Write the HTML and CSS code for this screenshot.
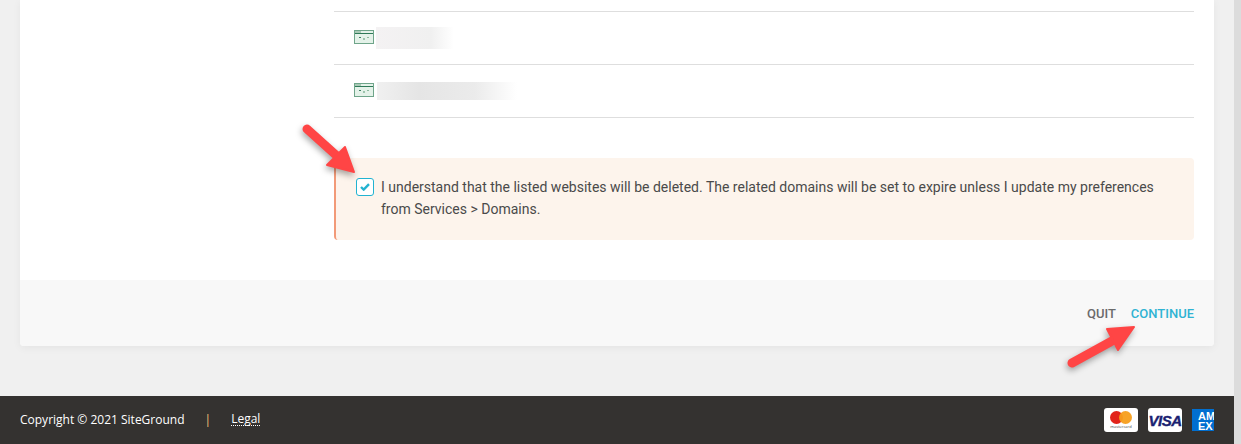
FILE: index.html
```html
<!DOCTYPE html>
<html lang="en">
<head>
  <meta charset="UTF-8">
  <title>SiteGround - Cancel Services</title>
  <link rel="stylesheet" href="styles.css">
</head>
<body>
  <div class="page">
    <main class="content">
      <section class="card">
        <div class="card-body">
          <ul class="site-list">
            <li class="site-row">
              <svg class="site-icon" width="20" height="14" viewBox="0 0 20 14">
                <rect x="0.5" y="0.5" width="19" height="13" fill="#e4f2e9" stroke="#6fa58a"/>
                <rect x="1" y="1" width="6" height="2" fill="#a9c9b6"/>
                <rect x="1" y="3" width="18" height="1" fill="#2f7a58"/>
                <rect x="5" y="7" width="2" height="1" fill="#3f7f62"/>
                <rect x="9" y="8" width="2" height="2" fill="#9cc4ad"/>
                <rect x="13" y="7" width="2" height="1" fill="#8dba9f"/>
              </svg>
              <span class="blur blur-short"></span>
            </li>
            <li class="site-row">
              <svg class="site-icon" width="20" height="14" viewBox="0 0 20 14">
                <rect x="0.5" y="0.5" width="19" height="13" fill="#e4f2e9" stroke="#6fa58a"/>
                <rect x="1" y="1" width="6" height="2" fill="#a9c9b6"/>
                <rect x="1" y="3" width="18" height="1" fill="#2f7a58"/>
                <rect x="5" y="7" width="2" height="1" fill="#3f7f62"/>
                <rect x="9" y="8" width="2" height="2" fill="#9cc4ad"/>
                <rect x="13" y="7" width="2" height="1" fill="#8dba9f"/>
              </svg>
              <span class="blur blur-long"></span>
            </li>
          </ul>
          <div class="notice">
            <span class="checkbox">
              <svg width="10" height="8" viewBox="0 0 10 8">
                <path d="M1 4l2.7 2.6L9 1.2" fill="none" stroke="#22b3d1" stroke-width="2.4"/>
              </svg>
            </span>
            <p class="notice-text">I understand that the listed websites will be deleted. The related domains will be set to expire unless I update my preferences from Services &gt; Domains.</p>
          </div>
        </div>
        <div class="card-actions">
          <a class="action action-quit">QUIT</a>
          <a class="action action-continue">CONTINUE</a>
        </div>
      </section>
    </main>
    <footer class="footer">
      <div class="footer-left">
        <span>Copyright © 2021 SiteGround</span>
        <span class="footer-sep">|</span>
        <a class="footer-link">Legal</a>
      </div>
      <div class="pay-cards">
        <span class="pay pay-mc">
          <span class="mc-circles"><i class="mc-red"></i><i class="mc-orange"></i></span>
          <span class="mc-name">mastercard</span>
        </span>
        <span class="pay pay-visa">VISA</span>
        <span class="pay-amex">AM<br>EX</span>
      </div>
    </footer>
  </div>
  <div class="scroll-track"></div>

  <!-- annotation arrows on top of the screenshot -->
  <svg class="arrows" width="1241" height="444" viewBox="0 0 1241 444">
    <g fill="#ff4545" stroke="#ff4545" stroke-linejoin="round">
      <path d="M307 129L337 156" fill="none" stroke-width="9" stroke-linecap="round"/>
      <path d="M327 165L345 147L354 172Z" stroke-width="2"/>
      <path d="M1072 363L1112 341" fill="none" stroke-width="9" stroke-linecap="round"/>
      <path d="M1107 329L1118 350L1134 327Z" stroke-width="2"/>
    </g>
  </svg>
</body>
</html>
```

FILE: styles.css
```css
* {
  box-sizing: border-box;
}
html, body {
  margin: 0;
  height: 444px;
  overflow: hidden;
}
body {
  position: relative;
  display: flex;
  background: #f0f0f0;
  font-family: "Roboto", "Liberation Sans", sans-serif;
  color: #4a4a4a;
}
.page {
  flex: 1;
  display: flex;
  flex-direction: column;
  min-width: 0;
}
.scroll-track {
  width: 7px;
  background: #dcdcdc;
}

/* card */
.content {
  flex: 1;
  padding: 0 20px;
}
.card {
  background: #fff;
  border-radius: 0 0 4px 4px;
  box-shadow: 0 2px 8px rgba(0, 0, 0, 0.05);
}
.card-body {
  height: 280px;
  padding: 11px 20px 0 314px;
}
.site-list {
  list-style: none;
  margin: 0;
  padding: 0;
  border-top: 1px solid #dedede;
}
.site-row {
  display: flex;
  align-items: center;
  height: 53px;
  padding-left: 20px;
  border-bottom: 1px solid #dedede;
}
.site-icon {
  flex: none;
  margin-top: -3px;
}
.blur {
  display: block;
}
.blur-short {
  width: 78px;
  height: 22px;
  margin-left: 2px;
  background: linear-gradient(90deg, #f4f2f3, #f0f0f0 70%, #fff);
}
.blur-long {
  width: 140px;
  height: 18px;
  margin-left: 3px;
  background: linear-gradient(90deg, #f0f0f0, #e5e5e5 30%, #ebebeb 70%, #fff);
}

/* notice */
.notice {
  display: flex;
  height: 82px;
  margin-top: 40px;
  padding: 18px 20px 0 20px;
  background: #fdf4ec;
  border-left: 2px solid #f29a78;
  border-radius: 2px 4px 4px 4px;
}
.checkbox {
  flex: none;
  display: flex;
  align-items: center;
  justify-content: center;
  width: 18px;
  height: 18px;
  margin-top: 2px;
  background: #fff;
  border: 1px solid #22b3d1;
  border-radius: 3px;
}
.notice-text {
  margin: 0 0 0 7px;
  font-size: 14px;
  line-height: 22px;
}

/* actions */
.card-actions {
  display: flex;
  justify-content: flex-end;
  align-items: center;
  gap: 15px;
  height: 66px;
  padding: 0 20px;
  background: #f8f8f8;
  border-radius: 0 0 4px 4px;
}
.action {
  font-size: 13px;
  font-weight: 500;
}
.action-quit {
  color: #6b6b6b;
}
.action-continue {
  color: #2fb3d3;
}

/* footer */
.footer {
  flex: none;
  display: flex;
  justify-content: space-between;
  align-items: center;
  height: 48px;
  padding: 0 20px;
  background: #343230;
  color: #fff;
  font-family: "Open Sans", "Liberation Sans", sans-serif;
  font-size: 12px;
}
.footer-left {
  display: flex;
  align-items: center;
  margin-top: -2px;
}
.footer-sep {
  margin: 0 20px 0 20px;
  color: #f2c27a;
}
.footer-link {
  border-bottom: 1px dotted #fff;
  line-height: 13px;
}
.pay-cards {
  display: flex;
  align-items: center;
  gap: 10px;
}
.pay {
  display: flex;
  width: 34px;
  height: 24px;
  background: #fff;
  border-radius: 3px;
}
.pay-mc {
  flex-direction: column;
  align-items: center;
  padding-top: 3px;
}
.mc-circles {
  display: flex;
}
.mc-circles i {
  display: block;
  width: 13px;
  height: 13px;
  border-radius: 50%;
}
.mc-red {
  background: #e2231a;
}
.mc-orange {
  margin-left: -4px;
  background: #f79e1b;
  opacity: 0.95;
}
.mc-name {
  font-size: 4px;
  line-height: 5px;
  color: #444;
}
.pay-visa {
  align-items: center;
  justify-content: center;
  font-family: "Liberation Sans", sans-serif;
  font-size: 15px;
  font-style: italic;
  font-weight: 700;
  letter-spacing: -0.5px;
  color: #1a1f71;
  -webkit-text-stroke: 0.4px #1a1f71;
}
.pay-amex {
  width: 22px;
  height: 22px;
  overflow: hidden;
  padding: 2px 0 0 6px;
  background: #016fd0;
  color: #fff;
  font-family: "Liberation Sans", sans-serif;
  font-size: 11px;
  font-weight: 700;
  line-height: 10px;
  white-space: nowrap;
}

.arrows {
  position: absolute;
  top: 0;
  left: 0;
  pointer-events: none;
  filter: drop-shadow(-1px 3px 3px rgba(0, 0, 0, 0.35));
}
```
